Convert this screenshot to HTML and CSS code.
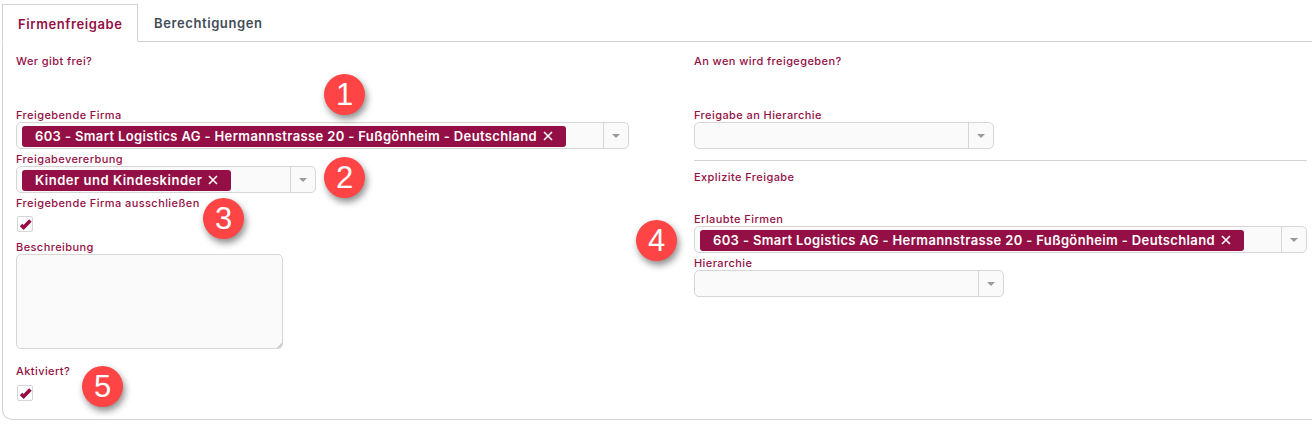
FILE: index.html
```html
<!DOCTYPE html>
<html lang="de">
<head>
<meta charset="utf-8">
<title>Firmenfreigabe</title>
<link rel="stylesheet" href="styles.css">
</head>
<body>
<div class="panel">
  <nav class="tabs">
    <a class="tab tab-active">Firmenfreigabe</a>
    <a class="tab">Berechtigungen</a>
  </nav>
  <div class="content">
    <section class="col col-left">
      <div class="label">Wer gibt frei?</div>
      <div class="label gap-lg">Freigebende Firma</div>
      <div class="select w-613">
        <div class="select-value"><span class="tag">603 - Smart Logistics AG - Hermannstrasse 20 - Fußgönheim - Deutschland<svg class="tag-x" viewBox="0 0 10 10"><path d="M1 1l8 8M9 1L1 9"/></svg></span></div>
        <div class="select-arrow"><i></i></div>
      </div>
      <div class="label gap-sm">Freigabevererbung</div>
      <div class="select w-300">
        <div class="select-value"><span class="tag tag-short">Kinder und Kindeskinder<svg class="tag-x" viewBox="0 0 10 10"><path d="M1 1l8 8M9 1L1 9"/></svg></span></div>
        <div class="select-arrow"><i></i></div>
      </div>
      <div class="label gap-sm">Freigebende Firma ausschließen</div>
      <div class="check"><svg viewBox="0 0 14 14"><path d="M3 8l2.6 2.4L12.4 3.4"/></svg></div>
      <div class="label gap-md">Beschreibung</div>
      <textarea class="textarea"></textarea>
      <div class="label gap-xl">Aktiviert?</div>
      <div class="check"><svg viewBox="0 0 14 14"><path d="M3 8l2.6 2.4L12.4 3.4"/></svg></div>
    </section>
    <section class="col col-right">
      <div class="label">An wen wird freigegeben?</div>
      <div class="label gap-lg">Freigabe an Hierarchie</div>
      <div class="select w-300">
        <div class="select-value"></div>
        <div class="select-arrow"><i></i></div>
      </div>
      <hr class="rule">
      <div class="label">Explizite Freigabe</div>
      <div class="label gap-27">Erlaubte Firmen</div>
      <div class="select w-full">
        <div class="select-value"><span class="tag">603 - Smart Logistics AG - Hermannstrasse 20 - Fußgönheim - Deutschland<svg class="tag-x" viewBox="0 0 10 10"><path d="M1 1l8 8M9 1L1 9"/></svg></span></div>
        <div class="select-arrow"><i></i></div>
      </div>
      <div class="label gap-sm">Hierarchie</div>
      <div class="select w-310">
        <div class="select-value"></div>
        <div class="select-arrow"><i></i></div>
      </div>
    </section>
  </div>
</div>
<span class="marker m1">1</span>
<span class="marker m2">2</span>
<span class="marker m3">3</span>
<span class="marker m4">4</span>
<span class="marker m5">5</span>
</body>
</html>
```
FILE: styles.css
```css
* { box-sizing: border-box; }
html, body { margin: 0; height: 424px; overflow: hidden; background: #fff; }
body { position: relative; font-family: Inter, "Liberation Sans", sans-serif; }

.panel {
  margin: 4px 0 0 2px;
  height: 416px;
  border-left: 1px solid #d2d2d2;
  border-bottom: 1px solid #d2d2d2;
  border-bottom-left-radius: 10px;
}
.tabs {
  display: flex;
  height: 38px;
  border-bottom: 1px solid #d2d2d2;
}
.tab {
  height: 38px;
  padding: 0 16px;
  font-size: 13px;
  font-weight: 600;
  line-height: 38px;
  letter-spacing: 0.6px;
  color: #3f4d58;
}
.tab-active {
  width: 136px;
  margin-left: -1px;
  padding: 0 15px;
  border: 1px solid #d2d2d2;
  border-bottom-color: #fff;
  color: #930f45;
}
.content { display: flex; padding: 11px 5px 0 13px; }
.col { display: flex; flex-direction: column; align-items: flex-start; }
.col-left { width: 678px; flex: none; }
.col-right { flex: 1; }

.label {
  height: 15px;
  font-size: 11px;
  font-weight: 500;
  line-height: 17px;
  letter-spacing: 0.42px;
  color: #930f45;
  white-space: nowrap;
}
.gap-sm { margin-top: 2px; }
.gap-md { margin-top: 7px; }
.gap-xl { margin-top: 14px; }
.gap-27 { margin-top: 27px; }
.gap-lg { margin-top: 39px; }

.select {
  display: flex;
  height: 27px;
  background: #fafafa;
  border: 1px solid #d6d6d6;
  border-radius: 5px;
}
.w-613 { width: 613px; }
.w-300 { width: 300px; }
.w-310 { width: 310px; }
.w-full { width: 100%; }
.select-value { flex: 1; padding: 2px 0 0 5px; }
.select-arrow {
  display: flex;
  align-items: center;
  justify-content: center;
  width: 25px;
  border-left: 1px solid #d6d6d6;
}
.select-arrow i {
  border-top: 4px solid #9a9a9a;
  border-left: 4px solid transparent;
  border-right: 4px solid transparent;
  margin-top: 1px;
}
.tag {
  display: inline-flex;
  align-items: center;
  height: 21px;
  padding: 0 13px;
  border-radius: 3px;
  background: #930f45;
  color: #fff;
  font-size: 13px;
  font-weight: 600;
  letter-spacing: 0.36px;
  white-space: nowrap;
}
.tag-short { letter-spacing: 0.52px; }
.tag-x { width: 10px; height: 10px; margin-left: 6px; fill: none; stroke: #fff; stroke-width: 1.6; }

.check {
  width: 16px;
  height: 16px;
  margin: 6px 0 0 1px;
  background: #fff;
  border: 1px solid #d6d6d6;
  border-radius: 2px;
}
.check svg { display: block; width: 14px; height: 14px; fill: none; stroke: #930f45; stroke-width: 3.6; }
.gap-xl + .check { margin-top: 7px; }

.textarea {
  display: block;
  width: 267px;
  height: 95px;
  padding: 0;
  border: 1px solid #d6d6d6;
  border-radius: 5px;
  resize: none;
  background:
    linear-gradient(135deg, transparent 50%, #cfcfcf 50%) right bottom / 6px 6px no-repeat,
    #fafafa;
}
.rule {
  width: 100%;
  height: 1px;
  margin: 11px 0 8px;
  border: 0;
  background: #d2d2d2;
}

.marker {
  position: absolute;
  width: 41px;
  height: 41px;
  border-radius: 50%;
  background: #fe4444;
  box-shadow: 2px 4px 7px rgba(0, 0, 0, 0.45);
  color: #fff;
  font-family: "Liberation Sans", Arial, sans-serif;
  font-size: 31px;
  line-height: 41px;
  text-align: center;
}
.m1 { left: 324px; top: 74px; }
.m2 { left: 324px; top: 157px; }
.m3 { left: 203px; top: 198px; }
.m4 { left: 636px; top: 220px; }
.m5 { left: 82px; top: 366px; }
```
